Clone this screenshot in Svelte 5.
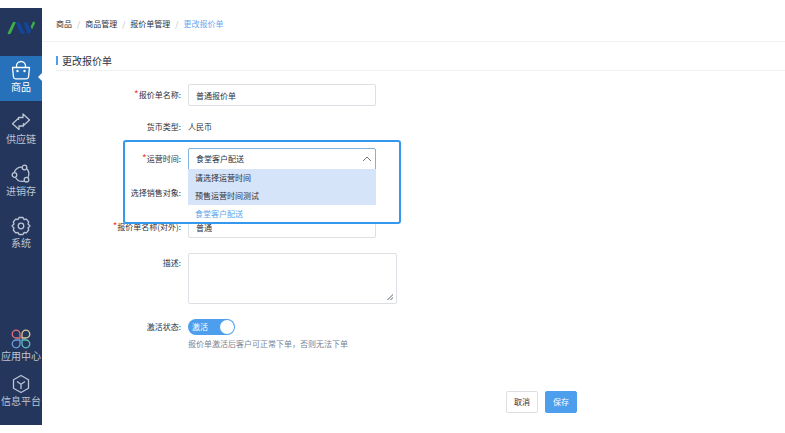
<script lang="ts">
  let name = $state("普通报价单");
  let outerName = $state("普通");
  let remark = $state("");
  let active = $state(true);
  let open = $state(true);
  let serviceTime = $state("食堂客户配送");

  const crumbs = ["商品", "商品管理", "报价单管理"];
  const times = ["请选择运营时间", "预售运营时间测试", "食堂客户配送"];

  function choose(time: string) {
    serviceTime = time;
    open = false;
  }
</script>

<div class="page">
  <nav class="sidebar">
    <a class="logo" href="#home" aria-label="首页">
      <svg width="28" height="16" viewBox="0 0 28 16">
        <path d="M0.500 13.500L5.500 3Q7 .8 8.800 2.600L4 13Q2 15.200.5 13.500z" fill="#3fae49" />
        <path d="M9 2.500h3.500L17.500 13q-2 1.800-4 0z" fill="#12479f" />
        <path d="M16.500 2.500H20L24 11l-1 2q-1.500 1.200-2.500 0z" fill="#12479f" />
        <path d="M25.800 2l2-.5v2.300L25 9.500l-1.300-2.700z" fill="#3fae49" />
      </svg>
    </a>

    <a class="item active" href="#goods">
      <svg width="20" height="20" viewBox="0 0 20 20">
        <path d="M1.500 7.500h17l-1 9.500q-.2 1.800-2 1.800h-11q-1.800 0-2-1.800z" />
        <path d="M5.500 7.500V6a4.500 4.500 0 0 1 9 0v1.500" />
        <circle cx="6.500" cy="11" r="1.200" class="dot" />
        <circle cx="13.500" cy="11" r="1.200" class="dot" />
      </svg>
      <span>商品</span>
    </a>
    <a class="item" href="#supply">
      <svg width="20" height="20" viewBox="0 0 20 20">
        <path d="M7.500 8V5.500H12V2l6.500 6-6 5.500v-2.300" />
        <path d="M12.500 11.500V14H8v3.500L1.500 11.800l6-5.500" />
      </svg>
      <span>供应链</span>
    </a>
    <a class="item" href="#stock">
      <svg width="20" height="20" viewBox="0 0 20 20">
        <path d="M11 3.200A8 8 0 0 0 3.200 8.500M4.500 13.500A8 8 0 0 0 13 17.200M16 5a8 8 0 0 1 1 8.500" />
        <circle cx="13.500" cy="3.500" r="2.300" />
        <circle cx="3.500" cy="11" r="2.300" />
        <circle cx="15.500" cy="15.700" r="2.300" />
      </svg>
      <span>进销存</span>
    </a>
    <a class="item" href="#system">
      <svg width="20" height="20" viewBox="0 0 20 20">
        <path d="M8 1.500h4l1 2 2.400-.4 2.300 2.900-.7 2 2 2-2 2 .7 2-2.300 2.900-2.400-.4-1 2H8l-1-2-2.400.4L2.300 14l.7-2-2-2 2-2-.7-2 2.300-2.900 2.400.4z" />
        <circle cx="10" cy="10" r="2.800" />
      </svg>
      <span>系统</span>
    </a>

    <div class="bottom">
      <a class="item" href="#apps">
        <svg width="20" height="20" viewBox="0 0 20 20">
          <path d="M9 9H5.200A3.900 3.900 0 1 1 9 5.200z" stroke="#e0707c" />
          <path d="M11 9V5.200A3.900 3.900 0 1 1 14.800 9z" stroke="#d9c9a0" />
          <path d="M9 11v3.800A3.900 3.900 0 1 1 5.200 11z" stroke="#6d9fe0" />
          <path d="M11 11h3.800a3.900 3.900 0 1 1-3.800 3.800z" stroke="#5cc0b8" />
        </svg>
        <span>应用中心</span>
      </a>
      <a class="item" href="#info">
        <svg width="20" height="20" viewBox="0 0 20 20">
          <path d="M10 1.500l7.500 4.200v8.600L10 18.500l-7.500-4.200V5.700z" />
          <path d="M6 7.500l4 2.800 4-2.800M10 10.300V15" />
        </svg>
        <span>信息平台</span>
      </a>
    </div>
  </nav>

  <main>
    <header class="crumbs">
      {#each crumbs as crumb}
        <a href="#crumb">{crumb}</a><i>/</i>
      {/each}
      <span class="current">更改报价单</span>
    </header>

    <h1>更改报价单</h1>

    <form onsubmit={(e) => e.preventDefault()}>
      <div class="row">
        <label class="label required" for="name">报价单名称:</label>
        <input class="control" id="name" type="text" bind:value={name} />
      </div>

      <div class="row">
        <span class="label">货币类型:</span>
        <span class="text">人民币</span>
      </div>

      <div class="row time">
        <label class="label required" for="time">运营时间:</label>
        <div class="picker">
          <select class="control" id="time" bind:value={serviceTime} onmousedown={(e) => { e.preventDefault(); open = !open; }}>
            {#each times as time}
              <option value={time}>{time}</option>
            {/each}
          </select>
          <svg class="arrow" class:open width="10" height="6" viewBox="0 0 10 6">
            <path d="M1 1l4 4 4-4" />
          </svg>
          {#if open}
            <ul class="menu">
              {#each times as time}
                <li>
                  <button type="button" class:selected={time === serviceTime} onclick={() => choose(time)}>{time}</button>
                </li>
              {/each}
            </ul>
          {/if}
        </div>
        <div class="highlight"></div>
      </div>

      <div class="row target">
        <span class="label">选择销售对象:</span>
      </div>

      <div class="row">
        <label class="label required" for="outer">报价单名称(对外):</label>
        <input class="control" id="outer" type="text" bind:value={outerName} />
      </div>

      <div class="row spaced">
        <label class="label remark" for="remark">描述:</label>
        <textarea id="remark" bind:value={remark}></textarea>
      </div>

      <div class="row spaced">
        <label class="label status" for="active">激活状态:</label>
        <div>
          <label class="switch" class:on={active}>
            <input id="active" type="checkbox" bind:checked={active} />
            <span>激活</span>
            <b></b>
          </label>
          <p>报价单激活后客户可正常下单，否则无法下单</p>
        </div>
      </div>

      <footer>
        <button type="button" class="btn">取消</button>
        <button type="submit" class="btn primary">保存</button>
      </footer>
    </form>
  </main>
</div>

<style>
  :global(body) {
    margin: 0;
    background: #fff;
  }

  .page {
    display: flex;
    min-height: calc(100vh - 16px);
    padding: 8px 0;
    color: #2c3140;
    font-family: "Noto Sans CJK SC", "Noto Sans", sans-serif;
    font-size: 8px;
    line-height: 22px;
  }

  .page * {
    box-sizing: border-box;
  }

  a {
    color: inherit;
    text-decoration: none;
  }

  input, select, textarea, button {
    margin: 0;
    color: inherit;
    font: inherit;
  }

  .sidebar {
    display: flex;
    flex-direction: column;
    flex: none;
    gap: 7px;
    width: 42px;
    padding-bottom: 10px;
    background: #24365b;
  }

  .logo {
    display: flex;
    justify-content: center;
    height: 41px;
    padding-top: 12px;
  }

  .item {
    position: relative;
    display: flex;
    flex-direction: column;
    align-items: center;
    height: 45px;
    padding-top: 4px;
    color: #bcc5d6;
    font-size: 10px;
    line-height: 14px;
    white-space: nowrap;
  }

  .item svg {
    flex: none;
    fill: none;
    stroke: currentColor;
    stroke-width: 1.3;
    stroke-linejoin: round;
  }

  .item .dot {
    fill: currentColor;
    stroke: none;
  }

  .item.active {
    background: #2671ba;
    color: #fff;
  }

  .item.active::after {
    content: "";
    position: absolute;
    right: 0;
    top: 17px;
    border: 4px solid transparent;
    border-right-color: #fff;
    border-left: 0;
  }

  .bottom {
    margin-top: auto;
  }

  main {
    flex: 1;
    min-width: 0;
  }

  .crumbs {
    display: flex;
    gap: 5px;
    height: 34px;
    padding-left: 14px;
    border-bottom: 1px solid #f0f1f3;
    line-height: 32px;
  }

  .crumbs i {
    color: #b5bac4;
    font-style: normal;
  }

  .current {
    color: #6aa9ef;
  }

  h1 {
    display: flex;
    align-items: center;
    gap: 4px;
    height: 20px;
    margin: 9px 0 13px 14px;
    border-bottom: 1px solid #f0f1f3;
    font-size: 10px;
    font-weight: 400;
  }

  h1::before {
    content: "";
    width: 2px;
    height: 9px;
    background: #4d9eec;
  }

  form {
    display: flex;
    flex-direction: column;
    gap: 10px;
  }

  .row {
    position: relative;
    display: flex;
    gap: 7px;
    min-height: 22px;
  }

  .label {
    flex: none;
    width: 139px;
    text-align: right;
  }

  .required::before {
    content: "*";
    color: #f0403c;
    font-size: 10px;
    line-height: 1;
  }

  .target {
    min-height: 26px;
    align-items: center;
  }

  .spaced {
    margin-top: 5px;
  }

  .control {
    display: block;
    width: 188px;
    height: 22px;
    padding: 0 7px;
    border: 1px solid #dcdfe4;
    border-radius: 2px;
    background: #fff;
    line-height: 20px;
    outline: none;
  }

  .picker {
    position: relative;
    height: 22px;
  }

  select.control {
    appearance: none;
    border-color: #7fb2dc;
    border-radius: 2px 2px 0 0;
  }

  .arrow {
    position: absolute;
    right: 4px;
    top: 8px;
    fill: none;
    stroke: #6b7384;
    pointer-events: none;
  }

  .arrow.open {
    transform: rotate(180deg);
  }

  .menu {
    position: absolute;
    z-index: 1;
    top: 21px;
    left: 0;
    width: 188px;
    margin: 0;
    padding: 0;
    background: #fff;
    list-style: none;
  }

  .menu button {
    display: block;
    width: 100%;
    height: 18px;
    padding: 0 7px;
    border: 0;
    background: #d5e4f9;
    line-height: 18px;
    text-align: left;
  }

  .menu .selected {
    background: #fff;
    color: #5ba6ee;
  }

  .highlight {
    position: absolute;
    z-index: 2;
    top: -8px;
    left: 81px;
    width: 278px;
    height: 84px;
    border: 2px solid #3498ee;
    border-radius: 3px;
    pointer-events: none;
  }

  textarea {
    width: 209px;
    height: 51px;
    padding: 4px 7px;
    border: 1px solid #dcdfe4;
    border-radius: 2px;
    background: #fff;
    line-height: 14px;
    resize: both;
    outline: none;
  }

  textarea::-webkit-resizer {
    background: repeating-linear-gradient(135deg, transparent 0 2px, #a9adb5 2px 3px);
    clip-path: polygon(100% 0, 100% 100%, 0 100%);
    background-size: 6px 6px;
    background-position: right 3px bottom 3px;
    background-repeat: no-repeat;
    background-image: linear-gradient(135deg, transparent 50%, #a9adb5 50% 60%, transparent 60% 75%, #a9adb5 75% 85%, transparent 85%);
  }

  .remark {
    line-height: 20px;
  }

  .status {
    line-height: 16px;
  }

  .switch {
    display: flex;
    align-items: center;
    justify-content: space-between;
    width: 47px;
    height: 16px;
    padding: 0 1px 0 4px;
    border-radius: 8px;
    background: #b9bfca;
    color: #fff;
    line-height: 16px;
  }

  .switch.on {
    background: #4d9eec;
  }

  .switch input {
    position: absolute;
    opacity: 0;
  }

  .switch b {
    width: 14px;
    height: 14px;
    border-radius: 50%;
    background: #fff;
  }

  p {
    margin: 0;
    color: #7b8292;
    line-height: 18px;
  }

  footer {
    display: flex;
    justify-content: flex-end;
    gap: 7px;
    margin-top: 28px;
    padding-right: 208px;
  }

  .btn {
    width: 32px;
    height: 22px;
    padding: 0;
    border: 1px solid #dcdfe4;
    border-radius: 2px;
    background: #fff;
    line-height: 20px;
  }

  .primary {
    border-color: #4d9eec;
    background: #4d9eec;
    color: #fff;
  }
</style>
